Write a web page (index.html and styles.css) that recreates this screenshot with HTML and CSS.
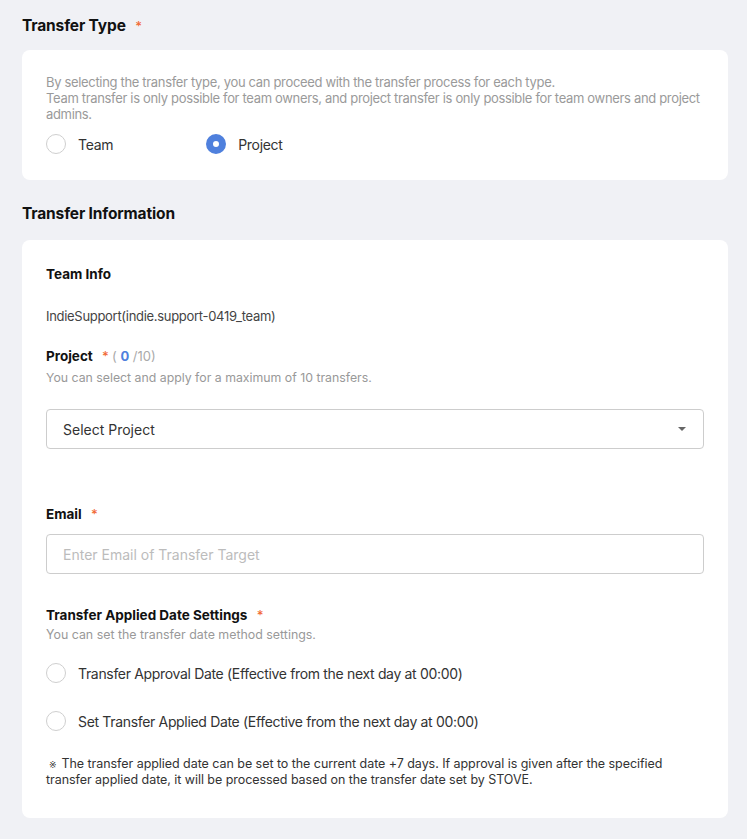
FILE: index.html
```html
<!DOCTYPE html>
<html lang="en">
<head>
<meta charset="utf-8">
<link rel="stylesheet" href="styles.css">
</head>
<body>
<main class="page">
  <h2 class="section-title">Transfer Type <span class="req">*</span></h2>
  <section class="card card-type">
    <p class="desc">By selecting the transfer type, you can proceed with the transfer process for each type.<br>Team transfer is only possible for team owners, and project transfer is only possible for team owners and project admins.</p>
    <div class="radio-row">
      <label class="radio"><span class="dot"></span><span class="radio-text">Team</span></label>
      <label class="radio radio-second"><span class="dot dot-on"></span><span class="radio-text">Project</span></label>
    </div>
  </section>

  <h2 class="section-title title-info">Transfer Information</h2>
  <section class="card card-info">
    <h3 class="field-label">Team Info</h3>
    <p class="team-name">IndieSupport(indie.support-0419_team)</p>

    <h3 class="field-label label-project">Project <span class="req">*</span> <span class="count">( <b>0</b> /10)</span></h3>
    <p class="help">You can select and apply for a maximum of 10 transfers.</p>
    <div class="select">
      <span>Select Project</span>
      <svg class="caret" width="8" height="4" viewBox="0 0 8 4"><path d="M0 0h8L4 4z" fill="#666"/></svg>
    </div>

    <h3 class="field-label label-email">Email <span class="req">*</span></h3>
    <div class="input"><span class="placeholder">Enter Email of Transfer Target</span></div>

    <h3 class="field-label label-date">Transfer Applied Date Settings <span class="req">*</span></h3>
    <p class="help help-tight">You can set the transfer date method settings.</p>
    <label class="radio radio-line first-line"><span class="dot"></span><span class="radio-text">Transfer Approval Date (Effective from the next day at 00:00)</span></label>
    <label class="radio radio-line second-line"><span class="dot"></span><span class="radio-text">Set Transfer Applied Date (Effective from the next day at 00:00)</span></label>

    <p class="note">The transfer applied date can be set to the current date +7 days. If approval is given after the specified transfer applied date, it will be processed based on the transfer date set by STOVE.</p>
  </section>
</main>
</body>
</html>
```

FILE: styles.css
```css
* { box-sizing: border-box; }
html, body { margin: 0; padding: 0; }
body {
  background: #f0f1f5;
  font-family: Inter, "Noto Sans", "Liberation Sans", sans-serif;
  color: #222;
}
.page {
  padding: 16px 19px 21px 22px;
}
.section-title {
  margin: 0 0 14px;
  font-size: 15.5px;
  line-height: 20px;
  font-weight: 700;
  color: #111;
  letter-spacing: -0.15px;
}
.title-info { margin-top: 24px; margin-bottom: 16px; }
.req {
  color: #f26a36;
  font-weight: 500;
  margin-left: 6px;
  font-size: 13px;
  letter-spacing: 0;
}
.card {
  background: #fff;
  border-radius: 8px;
}
.card-type {
  padding: 24px 24px 24px;
}
.desc {
  margin: 0;
  font-size: 13px;
  line-height: 16px;
  color: #9a9a9a;
  letter-spacing: -0.33px;
}
.radio-row {
  display: flex;
  margin-top: 10px;
}
.radio {
  display: flex;
  align-items: center;
  height: 24px;
  font-size: 14px;
  color: #333;
}
.radio-row .radio { letter-spacing: -0.3px; }
.radio-second { margin-left: 93px; }
.dot {
  width: 20px;
  height: 20px;
  border: 1px solid #cfcfcf;
  border-radius: 50%;
  margin-right: 12px;
  flex: none;
  background: #fff;
}
.dot-on {
  border: 7px solid #4f80dd;
  background: #fff;
}
.card-info {
  padding: 25px 24px 30px;
}
.field-label {
  margin: 0;
  font-size: 13.5px;
  line-height: 18px;
  font-weight: 700;
  color: #111;
  letter-spacing: 0;
}
.team-name {
  margin: 24px 0 0;
  font-size: 13px;
  line-height: 18px;
  color: #444;
  letter-spacing: -0.3px;
}
.label-project { margin-top: 22px; }
.count {
  font-weight: 400;
  color: #aaa;
  font-size: 13px;
}
.count b { color: #4f80dd; font-weight: 700; }
.help {
  margin: 5px 0 0;
  font-size: 12.3px;
  line-height: 16px;
  color: #999;
}
.help-tight { margin-top: 3px; font-size: 12.4px; }
.select, .input {
  margin-top: 23px;
  height: 40px;
  border: 1px solid #cdcdcd;
  border-radius: 4px;
  display: flex;
  align-items: center;
  justify-content: space-between;
  padding: 0 17px 0 16px;
  font-size: 14px;
  color: #333;
}
.label-email { margin-top: 56px; }
.input { margin-top: 11px; }
.placeholder { color: #bcbcbc; }
.label-date { margin-top: 32px; }
.radio-line { margin-top: 18px; letter-spacing: -0.33px; }
.second-line { margin-top: 24px; }
.note {
  margin: 23px 0 0;
  font-size: 12.5px;
  line-height: 16px;
  color: #333;
  letter-spacing: -0.05px;
}
.note::before {
  content: "※";
  font-family: "DejaVu Sans", "Noto Sans CJK KR", sans-serif;
  font-size: 9px;
  line-height: 1;
  margin: 0 5px 0 3px;
}
```
